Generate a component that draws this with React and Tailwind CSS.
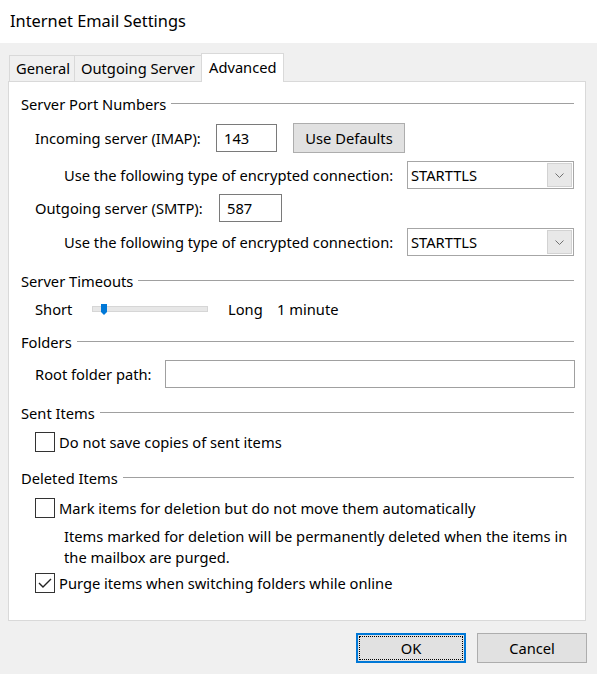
import React from "react";

const font = "font-['Noto_Sans',sans-serif]";

function SectionHeader({ title, mt }) {
  return (
    <div className={`flex items-center h-[20px] pl-[12px] pr-[11px] ${mt}`}>
      <span className="whitespace-nowrap">{title}</span>
      <div className="flex-1 h-px bg-[#a0a0a0] ml-[5px] mt-[-2px]" />
    </div>
  );
}

function Dropdown({ value }) {
  return (
    <div className="ml-auto w-[167px] h-[28px] border border-[#a6a6a6] bg-white flex items-center">
      <span className="pl-[3px] flex-1">{value}</span>
      <div className="w-[25px] h-[24px] mr-px bg-[#e8e8e8] border border-[#d2d2d2] flex items-center justify-center">
        <svg width="9" height="5" viewBox="0 0 9 5">
          <path d="M0.5 0.5 L4.5 4.5 L8.5 0.5" fill="none" stroke="#707070" strokeWidth="1" />
        </svg>
      </div>
    </div>
  );
}

function Checkbox({ checked }) {
  return (
    <div className="w-[20px] h-[20px] border border-[#333333] bg-white flex items-center justify-center shrink-0">
      {checked && (
        <svg width="18" height="18" viewBox="0 0 18 18">
          <path d="M3 9 L7 13 L15 5" fill="none" stroke="#222222" strokeWidth="1.4" />
        </svg>
      )}
    </div>
  );
}

export default function App() {
  return (
    <div className={`w-[597px] h-[674px] bg-[#f0f0f0] text-[14.7px] text-black ${font}`}>
      {/* title bar */}
      <div className="h-[43px] bg-white flex items-center pl-[10px] text-[16.4px]">
        Internet Email Settings
      </div>

      {/* tab strip */}
      <div className="h-[38px] flex items-end pl-[9px] relative z-10">
        <div className="h-[26px] w-[66px] border border-b-0 border-[#d9d9d9] flex items-center pl-[6px]">
          General
        </div>
        <div className="h-[26px] w-[126px] border-t border-[#d9d9d9] flex items-center pl-[6px]">
          Outgoing Server
        </div>
        <div className="h-[29px] w-[83px] mb-[-1px] border border-b-0 border-[#d9d9d9] bg-white flex items-center pl-[7px] pb-[2px]">
          Advanced
        </div>
      </div>

      {/* tab panel */}
      <div className="ml-[8px] w-[578px] h-[540px] bg-white border border-[#d9d9d9] flex flex-col">
        <SectionHeader title="Server Port Numbers" mt="mt-[12px]" />

        <div className="h-[30px] mt-[9px] flex items-center pl-[26px]">
          <span className="w-[181px]">Incoming server (IMAP):</span>
          <div className="w-[61px] h-[28px] border border-[#7a7a7a] flex items-center pl-[7px]">143</div>
          <button className="ml-[16px] w-[112px] h-[30px] bg-[#e1e1e1] border border-[#adadad] flex items-center justify-center">
            Use Defaults
          </button>
        </div>

        <div className="h-[28px] mt-[8px] flex items-center pl-[55px] pr-[11px]">
          <span>Use the following type of encrypted connection:</span>
          <Dropdown value="STARTTLS" />
        </div>

        <div className="h-[28px] mt-[5px] flex items-center pl-[26px]">
          <span className="w-[184px]">Outgoing server (SMTP):</span>
          <div className="w-[63px] h-[28px] border border-[#7a7a7a] flex items-center pl-[7px]">587</div>
        </div>

        <div className="h-[28px] mt-[6px] flex items-center pl-[55px] pr-[11px]">
          <span>Use the following type of encrypted connection:</span>
          <Dropdown value="STARTTLS" />
        </div>

        <SectionHeader title="Server Timeouts" mt="mt-[15px]" />

        <div className="h-[20px] mt-[8px] flex items-center pl-[26px]">
          <span className="w-[57px]">Short</span>
          <div className="relative w-[116px] h-[6px] bg-[#e7e7e7] border border-[#d6d6d6]">
            <svg className="absolute left-[8px] top-[-3px]" width="6" height="11" viewBox="0 0 6 11">
              <path d="M0 0 H6 V8 L3 11 L0 8 Z" fill="#0078d7" />
            </svg>
          </div>
          <span className="ml-[20px] w-[49px]">Long</span>
          <span>1 minute</span>
        </div>

        <SectionHeader title="Folders" mt="mt-[13px]" />

        <div className="h-[28px] mt-[8px] flex items-center pl-[26px]">
          <span className="w-[130px]">Root folder path:</span>
          <div className="w-[410px] h-[28px] border border-[#a0a0a0]" />
        </div>

        <SectionHeader title="Sent Items" mt="mt-[15px]" />

        <div className="h-[20px] mt-[9px] flex items-center pl-[26px] gap-[4px]">
          <Checkbox />
          <span>Do not save copies of sent items</span>
        </div>

        <SectionHeader title="Deleted Items" mt="mt-[16px]" />

        <div className="h-[20px] mt-[10px] flex items-center pl-[26px] gap-[4px]">
          <Checkbox />
          <span className="whitespace-nowrap">Mark items for deletion but do not move them automatically</span>
        </div>

        <div className="h-[42px] mt-[8px] pl-[55px] leading-[21px] whitespace-nowrap">
          Items marked for deletion will be permanently deleted when the items in
          <br />
          the mailbox are purged.
        </div>

        <div className="h-[20px] mt-[5px] flex items-center pl-[26px] gap-[4px]">
          <Checkbox checked />
          <span>Purge items when switching folders while online</span>
        </div>
      </div>

      {/* dialog buttons */}
      <div className="mt-[12px] flex justify-end gap-[11px] pr-[10px]">
        <button className="w-[110px] h-[30px] bg-[#e1e1e1] border-2 border-[#0078d7] p-px">
          <div className="w-full h-full border border-dotted border-black flex items-center justify-center">
            OK
          </div>
        </button>
        <button className="w-[110px] h-[30px] bg-[#e1e1e1] border border-[#adadad] flex items-center justify-center">
          Cancel
        </button>
      </div>
    </div>
  );
}
